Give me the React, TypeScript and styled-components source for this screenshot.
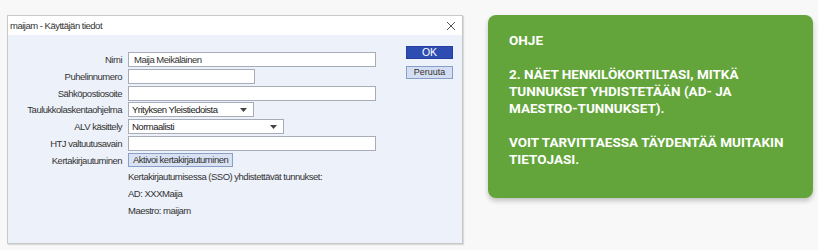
import { FC } from "react";
import styled, { createGlobalStyle } from "styled-components";

const GlobalStyle = createGlobalStyle`
  html, body {
    margin: 0;
    padding: 0;
    background: #f8f8f8;
  }
  body {
    width: 818px;
    height: 250px;
    overflow: hidden;
  }
`;

interface IField {
  label: string;
  value?: string;
  width: number;
  select?: boolean;
}

const fields: IField[] = [
  { label: "Nimi", value: "Maija Meikäläinen", width: 248 },
  { label: "Puhelinnumero", width: 127 },
  { label: "Sähköpostiosoite", width: 248 },
  { label: "Taulukkolaskentaohjelma", value: "Yrityksen Yleistiedoista", width: 126, select: true },
  { label: "ALV käsittely", value: "Normaalisti", width: 156, select: true },
  { label: "HTJ valtuutusavain", width: 248 },
];

const Caret: FC = () => (
  <svg width="7" height="4" viewBox="0 0 7 4">
    <path d="M0 0 H7 L3.5 4 Z" fill="#444" />
  </svg>
);

const CloseIcon: FC = () => (
  <svg width="10" height="10" viewBox="0 0 10 10">
    <path d="M1 1 L9 9 M9 1 L1 9" stroke="#555" strokeWidth="1" fill="none" />
  </svg>
);

const App: FC = () => {
  return (
    <>
      <GlobalStyle />
      <Page>
        <Dialog>
          <TitleBar>
            <span>maijam - Käyttäjän tiedot</span>
            <CloseIcon />
          </TitleBar>
          <Body>
            <Form>
              {fields.map((f) => (
                <Row key={f.label}>
                  <Label>{f.label}</Label>
                  {f.select ? (
                    <Select $width={f.width}>
                      <span>{f.value}</span>
                      <Caret />
                    </Select>
                  ) : (
                    <Input $width={f.width}>{f.value}</Input>
                  )}
                </Row>
              ))}
              <Row>
                <Label>Kertakirjautuminen</Label>
                <SmallButton>Aktivoi kertakirjautuminen</SmallButton>
              </Row>
              <Info>
                <p>Kertakirjautumisessa (SSO) yhdistettävät tunnukset:</p>
                <p>AD: XXXMaija</p>
                <p>Maestro: maijam</p>
              </Info>
            </Form>
            <Actions>
              <ActionButton $primary>OK</ActionButton>
              <ActionButton>Peruuta</ActionButton>
            </Actions>
          </Body>
        </Dialog>
        <HelpCard>
          <p>OHJE</p>
          <p>2. NÄET HENKILÖKORTILTASI, MITKÄ TUNNUKSET YHDISTETÄÄN (AD- JA MAESTRO-TUNNUKSET).</p>
          <p>VOIT TARVITTAESSA TÄYDENTÄÄ MUITAKIN TIETOJASI.</p>
        </HelpCard>
      </Page>
    </>
  );
};

export default App;

const Page = styled.div`
  display: flex;
  align-items: flex-start;
  gap: 25px;
  padding: 15px 0 0 7px;
`;

const Dialog = styled.div`
  width: 454px;
  height: 227px;
  border: 1px solid #c8c8c8;
  background: #edf1fa;
  box-shadow: 1px 1px 1px rgba(0, 0, 0, 0.12);
  display: flex;
  flex-direction: column;
  font-family: "Liberation Sans", Arial, sans-serif;
  font-size: 9.5px;
  letter-spacing: -0.5px;
  color: #222;
`;

const TitleBar = styled.div`
  height: 19px;
  background: #fff;
  display: flex;
  align-items: center;
  justify-content: space-between;
  padding: 0 6px 0 2px;
  color: #333;
`;

const Body = styled.div`
  flex: 1;
  display: flex;
  justify-content: space-between;
  padding: 11px 9px 0 0;
`;

const Form = styled.div`
  display: flex;
  flex-direction: column;
  gap: 1.8px;
  padding-top: 6px;
`;

const Row = styled.div`
  display: grid;
  grid-template-columns: 114px auto;
  column-gap: 6px;
  align-items: center;
  height: 15px;
`;

const Label = styled.span`
  text-align: right;
  color: #333;
  white-space: nowrap;
`;

const Input = styled.div<{ $width: number }>`
  width: ${({ $width }) => $width}px;
  height: 15px;
  box-sizing: border-box;
  border: 1px solid #a7adb8;
  background: #fff;
  padding: 0 0 0 5px;
  line-height: 13px;
  color: #333;
`;

const Select = styled.div<{ $width: number }>`
  width: ${({ $width }) => $width}px;
  height: 15px;
  box-sizing: border-box;
  border: 1px solid #a7adb8;
  background: #fff;
  padding: 0 6px 0 3px;
  display: flex;
  align-items: center;
  justify-content: space-between;
  color: #222;
`;

const SmallButton = styled.div`
  justify-self: start;
  height: 14px;
  box-sizing: border-box;
  padding: 0 4px;
  border: 1px solid #8a9fc8;
  background: #d8e2f3;
  line-height: 12px;
  color: #333;
`;

const Info = styled.div`
  display: flex;
  flex-direction: column;
  gap: 5px;
  padding: 1px 0 0 120px;
  color: #333;

  p {
    margin: 0;
    line-height: 12px;
  }
`;

const Actions = styled.div`
  display: flex;
  flex-direction: column;
  gap: 7px;
`;

const ActionButton = styled.div<{ $primary?: boolean }>`
  width: 47px;
  height: 13px;
  box-sizing: border-box;
  text-align: center;
  line-height: 11px;
  letter-spacing: 0;
  border: 1px solid ${({ $primary }) => ($primary ? "#233e9e" : "#8a9fc8")};
  background: ${({ $primary }) => ($primary ? "#2d4db3" : "#d3def2")};
  color: ${({ $primary }) => ($primary ? "#fff" : "#333")};
  font-size: ${({ $primary }) => ($primary ? "10.5px" : "9px")};
`;

const HelpCard = styled.div`
  width: 325px;
  height: 183px;
  box-sizing: border-box;
  background: #63a53a;
  border-radius: 8px;
  box-shadow: 0 3px 5px rgba(0, 0, 0, 0.22);
  padding: 17px 12px 0 21px;
  font-family: Roboto, "Noto Sans", sans-serif;
  font-weight: 700;
  font-size: 13.5px;
  line-height: 17px;
  color: #fff;

  p {
    margin: 0 0 17px;
  }
`;
